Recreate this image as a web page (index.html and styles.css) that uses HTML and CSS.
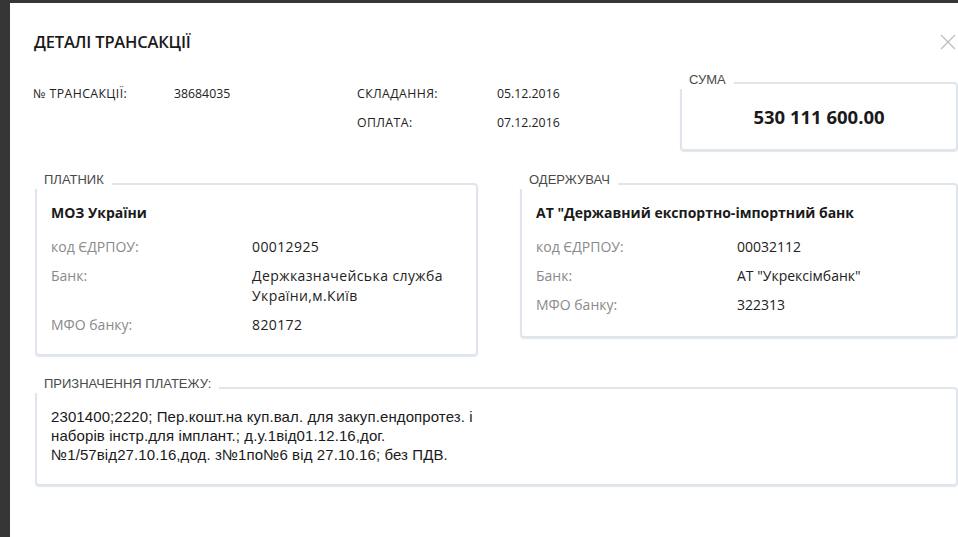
FILE: index.html
```html
<!DOCTYPE html>
<html lang="uk">
<head>
<meta charset="utf-8">
<title>Деталі трансакції</title>
<link rel="stylesheet" href="styles.css">
</head>
<body>
<div class="modal">
  <div class="title-row">
    <h1 class="title">ДЕТАЛІ ТРАНСАКЦІЇ</h1>
    <button class="close" aria-label="Закрити">
      <svg width="16" height="16" viewBox="0 0 16 16"><path d="M1 1 L15 15 M15 1 L1 15" stroke="#bdbdbd" stroke-width="1.3" fill="none"/></svg>
    </button>
  </div>

  <div class="header">
    <div class="meta">
      <div class="meta-row"><span class="meta-label">№ ТРАНСАКЦІЇ:</span><span class="meta-value">38684035</span></div>
    </div>
    <div class="meta dates">
      <div class="meta-row"><span class="meta-label">СКЛАДАННЯ:</span><span class="meta-value">05.12.2016</span></div>
      <div class="meta-row"><span class="meta-label">ОПЛАТА:</span><span class="meta-value">07.12.2016</span></div>
    </div>
    <div class="box sum">
      <span class="box-label">СУМА</span>
      <div class="amount">530 111 600.00</div>
    </div>
  </div>

  <div class="parties">
    <div class="box party payer">
      <span class="box-label">ПЛАТНИК</span>
      <div class="party-name">МОЗ України</div>
      <div class="field"><span class="field-label">код ЄДРПОУ:</span><span class="field-value">00012925</span></div>
      <div class="field"><span class="field-label">Банк:</span><span class="field-value">Держказначейська служба України,м.Київ</span></div>
      <div class="field"><span class="field-label">МФО банку:</span><span class="field-value">820172</span></div>
    </div>
    <div class="box party recipient">
      <span class="box-label">ОДЕРЖУВАЧ</span>
      <div class="party-name">АТ "Державний експортно-імпортний банк</div>
      <div class="field"><span class="field-label">код ЄДРПОУ:</span><span class="field-value">00032112</span></div>
      <div class="field"><span class="field-label">Банк:</span><span class="field-value">АТ "Укрексімбанк"</span></div>
      <div class="field"><span class="field-label">МФО банку:</span><span class="field-value">322313</span></div>
    </div>
  </div>

  <div class="box purpose">
    <span class="box-label">ПРИЗНАЧЕННЯ ПЛАТЕЖУ:</span>
    <p class="purpose-text">2301400;2220; Пер.кошт.на куп.вал. для закуп.ендопротез. і<br>наборів інстр.для імплант.; д.у.1від01.12.16,дог.<br>№1/57від27.10.16,дод. з№1по№6 від 27.10.16; без ПДВ.</p>
  </div>
</div>
</body>
</html>
```

FILE: styles.css
```css
* { box-sizing: border-box; }

html, body {
  margin: 0;
  height: 100%;
  overflow: hidden;
}

body {
  background: #363636;
  font-family: "Open Sans", "Liberation Sans", sans-serif;
  color: #222;
  padding: 3px 0 0 10px;
}

.modal {
  background: #fff;
  width: 949px;
  height: 100%;
  padding: 28px 1px 0 23px;
}

.title-row {
  display: flex;
  justify-content: space-between;
  align-items: center;
}

.title {
  margin: 0 0 0 1px;
  font-size: 16.5px;
  line-height: 22px;
  font-weight: 600;
  color: #1a1a1a;
  letter-spacing: -0.2px;
}

.close {
  border: 0;
  background: none;
  padding: 0;
  margin: 0 2px 0 0;
  width: 16px;
  height: 16px;
  display: flex;
}

.header {
  display: flex;
  align-items: flex-start;
  margin-top: 29px;
}

.meta {
  width: 324px;
  margin-top: 3px;
  font-size: 12.3px;
  line-height: 18px;
  color: #222;
}

.dates { width: 323px; }

.meta-row {
  display: flex;
  margin-bottom: 11px;
}

.meta-label {
  width: 141px;
  flex: none;
  letter-spacing: 0.4px;
}

.dates .meta-label { width: 140px; }

.box {
  position: relative;
  border: 2px solid #dfe5eb;
  border-radius: 4px;
  box-shadow: 0 1px 1px rgba(170, 185, 200, 0.35);
}

.box-label {
  position: absolute;
  left: -2px;
  top: -14px;
  background: #fff;
  padding: 0 8px 0 9px;
  font-family: "Liberation Sans", Arial, sans-serif;
  font-size: 13px;
  line-height: 18px;
  color: #4a4a4a;
}

.sum {
  flex: 1;
  padding: 22px 0;
  text-align: center;
}

.sum .box-label { text-align: left; top: -13px; }

.amount {
  font-size: 18.5px;
  line-height: 21px;
  font-weight: 700;
  color: #1a1a1a;
}

.parties {
  display: flex;
  align-items: flex-start;
  gap: 42px;
  margin-top: 32px;
  padding-left: 2px;
}

.party {
  padding: 18px 12px 19px 14px;
  font-size: 14px;
  line-height: 20px;
}

.payer { width: 443px; flex: none; }
.recipient { flex: 1; padding-bottom: 21px; }

.party-name {
  font-weight: 700;
  color: #1a1a1a;
  margin-bottom: 14px;
}

.field {
  display: flex;
  margin-top: 9px;
}

.party-name + .field { margin-top: 0; }

.field-label {
  width: 201px;
  flex: none;
  color: #8a8a8a;
}

.field-value {
  color: #222;
}

.payer .field-value { letter-spacing: 0.4px; }

.purpose {
  margin: 31px 0 0 2px;
  padding: 18px 14px 20px 14px;
}

.purpose-text {
  margin: 0;
  font-family: "Liberation Sans", Arial, sans-serif;
  font-size: 15px;
  letter-spacing: 0.1px;
  line-height: 19px;
  color: #1a1a1a;
}
```
